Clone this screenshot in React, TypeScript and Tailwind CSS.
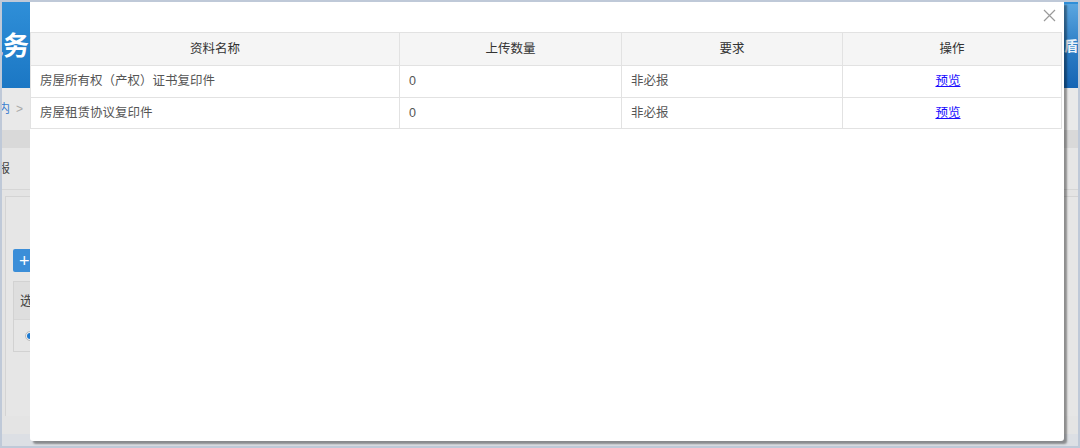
import React from "react";

const rows = [
  { name: "房屋所有权（产权）证书复印件", count: 0, req: "非必报", h: "h-[32px]" },
  { name: "房屋租赁协议复印件", count: 0, req: "非必报", h: "h-[31px]" },
];

const cols = ["w-[369px]", "w-[222px]", "w-[221px]", "flex-1"];

function Backdrop() {
  return (
    <div className="flex h-full w-full flex-col bg-[#e4e4e4]">
      {/* header banner */}
      <div className="flex h-[86px] shrink-0 items-center justify-between bg-gradient-to-b from-[#2f8fd8] to-[#1b77c4] pt-[2px]">
        <span className="-ml-[25px] text-[26px] font-bold leading-none text-white">
          税务
        </span>
        <div className="flex h-full w-[16px] items-center bg-gradient-to-b from-[#5aa6e0] via-[#2d7fc6] to-[#1565b4]">
          <span className="ml-[2px] text-[14px] font-bold text-white/90">盾</span>
        </div>
      </div>
      {/* breadcrumb */}
      <div className="flex h-[42px] shrink-0 items-center gap-[6px] bg-[#e9e9e9] text-[12px]">
        <span className="-ml-[28px] text-[#3c7fd0]">机构内</span>
        <span className="text-[#a8a8a8]">&gt;</span>
      </div>
      <div className="h-[18px] shrink-0 bg-[#d9d9d9]" />
      {/* tab row */}
      <div className="flex h-[42px] shrink-0 items-center border-b border-[#d6d6d6] bg-[#e6e6e6] text-[12px] text-[#444]">
        <span className="-ml-[4px]">报</span>
      </div>
      <div className="flex flex-1 pl-[3px] pt-[6px] pb-[18px]">
        <div className="flex flex-1 flex-col border-l border-t border-[#d4d4d4] bg-[#e6e6e6] pl-[7px] pt-[52px]">
          <div className="flex h-[23px] w-[40px] items-center rounded-[2px] bg-[#3b8ed8] pl-[6px] text-[18px] leading-none text-white">
            +
          </div>
          <div className="mt-[9px] w-[60px] border border-[#d2d2d2]">
            <div className="flex h-[37px] items-center bg-[#dedede] pl-[6px] text-[13px] text-[#444]">
              选
            </div>
            <div className="flex h-[32px] items-center border-t border-[#d6d6d6] pl-[11px]">
              <span className="flex h-[10px] w-[10px] items-center justify-center rounded-full border border-[#bbb] bg-[#eee]">
                <span className="h-[6px] w-[6px] rounded-full bg-[#1e7ad0]" />
              </span>
            </div>
          </div>
        </div>
      </div>
      <div className="h-[12px] shrink-0 bg-[#dcdfe4]" />
    </div>
  );
}

function CloseIcon() {
  return (
    <svg width="13" height="13" viewBox="0 0 13 13" className="block">
      <path d="M1 1L12 12M12 1L1 12" stroke="#9a9a9a" strokeWidth="1.2" />
    </svg>
  );
}

export default function App() {
  return (
    <div
      className="relative h-[448px] w-[1080px] overflow-hidden border-2 border-[#bfc9d8]"
      style={{ fontFamily: '"Liberation Sans", "Noto Sans CJK SC", sans-serif' }}
    >
      <Backdrop />
      {/* modal */}
      <div className="absolute left-[28px] top-[0px] flex h-[439px] w-[1034px] flex-col rounded-b-[3px] bg-white shadow-[3px_3px_2px_rgba(0,0,0,0.38)]">
        <div className="flex h-[30px] shrink-0 items-start justify-end pr-[8px] pt-[7px]">
          <CloseIcon />
        </div>
        <div className="mr-[2px] border border-[#e2e2e2] text-[12.5px]">
          <div className="flex h-[32px] bg-[#f5f5f5] text-[#333]">
            {["资料名称", "上传数量", "要求", "操作"].map((h, i) => (
              <div
                key={h}
                className={`${cols[i]} flex items-center justify-center ${i < 3 ? "border-r border-[#e2e2e2]" : ""}`}
              >
                {h}
              </div>
            ))}
          </div>
          {rows.map((r) => (
            <div key={r.name} className={`flex ${r.h} border-t border-[#e2e2e2] text-[#555]`}>
              <div className={`${cols[0]} flex items-center border-r border-[#e2e2e2] pl-[9px]`}>
                {r.name}
              </div>
              <div className={`${cols[1]} flex items-center border-r border-[#e2e2e2] pl-[9px]`}>
                {r.count}
              </div>
              <div className={`${cols[2]} flex items-center border-r border-[#e2e2e2] pl-[9px]`}>
                {r.req}
              </div>
              <div className={`${cols[3]} flex items-center justify-center pr-[8px]`}>
                <a href="#" className="text-[#1a0dff] underline">
                  预览
                </a>
              </div>
            </div>
          ))}
        </div>
      </div>
    </div>
  );
}
